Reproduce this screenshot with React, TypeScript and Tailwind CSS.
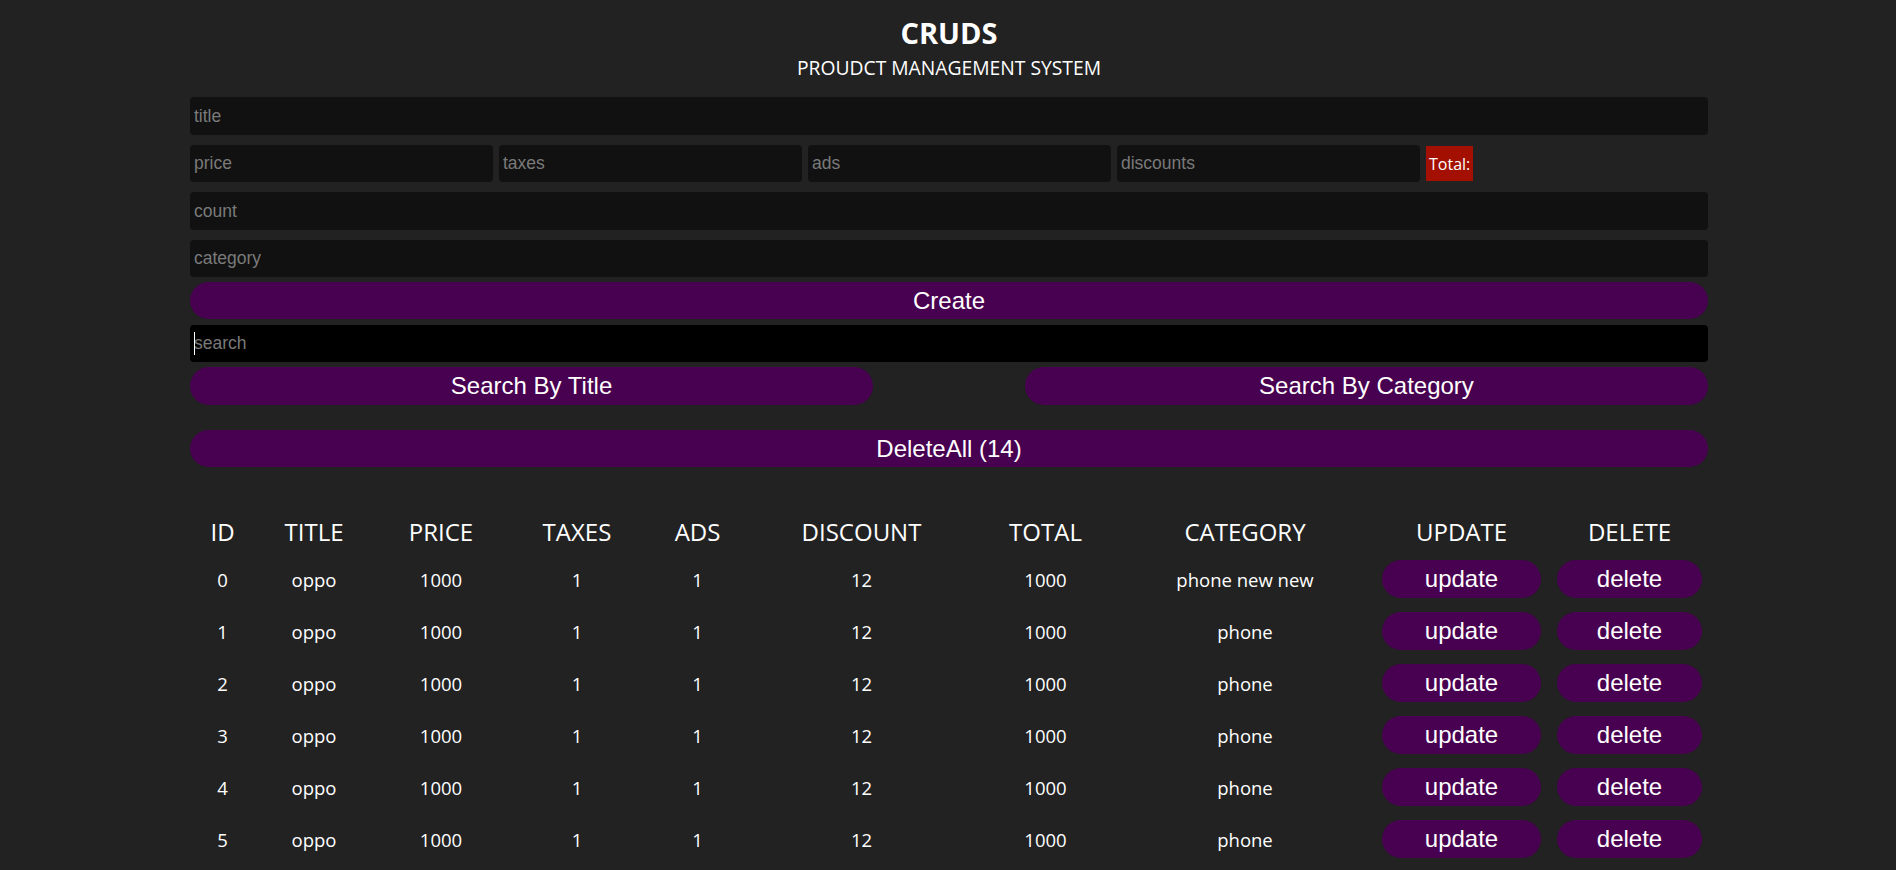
import React from 'react';

// product list shown in the table
const products = Array.from({ length: 14 }, (_, i) => ({
  id: i,
  title: 'oppo',
  price: 1000,
  taxes: 1,
  ads: 1,
  discount: 12,
  total: 1000,
  category: i === 0 ? 'phone new new' : 'phone',
}));

const inputCls =
  "h-[38px] w-full rounded-[4px] bg-[#111] px-[4px] text-[17.5px] text-white outline-none placeholder:text-[#7a7a7a] font-['Liberation_Sans',Arial,sans-serif]";

const btnCls =
  "h-[37px] w-full rounded-[20px] bg-[#480050] text-[24px] text-white font-['Liberation_Sans',Arial,sans-serif]";

export default function App() {
  return (
    <div className="h-screen overflow-hidden bg-[#222] text-white font-['Open_Sans',sans-serif]">
      <div className="ml-[190px] w-[1518px]">
        {/* Head */}
        <div className="pt-[15px] text-center uppercase">
          <h2 className="text-[29px] font-bold leading-[36px]">cruds</h2>
          <p className="mt-[2px] text-[19.3px] leading-[30px]">proudct management system</p>
        </div>

        {/* Inputs */}
        <div className="mt-[14px] flex flex-col">
          <input className={inputCls} placeholder="title" />
          <div className="mt-[10px] flex h-[37px] items-center gap-[6px]">
            <input className={inputCls + ' !w-[303px] !h-[37px]'} placeholder="price" />
            <input className={inputCls + ' !w-[303px] !h-[37px]'} placeholder="taxes" />
            <input className={inputCls + ' !w-[303px] !h-[37px]'} placeholder="ads" />
            <input className={inputCls + ' !w-[303px] !h-[37px]'} placeholder="discounts" />
            <span className="flex h-[35px] items-center bg-[#a30f00] px-[3px] text-[16px]">Total:</span>
          </div>
          <input className={inputCls + ' mt-[10px]'} placeholder="count" />
          <input className={inputCls + ' mt-[10px] !h-[37px]'} placeholder="category" />
          <button className={btnCls + ' mt-[5px]'}>Create</button>
        </div>

        {/* Search */}
        <div className="mt-[6px]">
          <div className="relative">
            <input className={inputCls + ' !h-[37px] !bg-black'} placeholder="search" />
            <span className="pointer-events-none absolute left-[4px] top-[7px] h-[23px] w-px bg-white" />
          </div>
          <div className="mt-[5px] flex justify-between">
            <button className={btnCls + ' !h-[38px] !w-[45%]'}>Search By Title</button>
            <button className={btnCls + ' !h-[38px] !w-[45%]'}>Search By Category</button>
          </div>
        </div>

        <div className="mt-[25px]">
          <button className={btnCls}>DeleteAll (14)</button>
        </div>

        {/* Table */}
        <table className="mt-[43px] w-full table-fixed text-center">
          <colgroup>
            <col className="w-[65px]" />
            <col className="w-[118px]" />
            <col className="w-[136px]" />
            <col className="w-[136px]" />
            <col className="w-[105px]" />
            <col className="w-[223px]" />
            <col className="w-[145px]" />
            <col className="w-[254px]" />
            <col className="w-[179px]" />
            <col />
          </colgroup>
          <thead>
            <tr className="text-[24px] uppercase">
              <th className="py-[5px] font-normal leading-[33px]">id</th>
              <th className="py-[5px] font-normal leading-[33px]">title</th>
              <th className="py-[5px] font-normal leading-[33px]">price</th>
              <th className="py-[5px] font-normal leading-[33px]">taxes</th>
              <th className="py-[5px] font-normal leading-[33px]">ads</th>
              <th className="py-[5px] font-normal leading-[33px]">discount</th>
              <th className="py-[5px] font-normal leading-[33px]">total</th>
              <th className="py-[5px] font-normal leading-[33px]">category</th>
              <th className="py-[5px] font-normal leading-[33px]">update</th>
              <th className="py-[5px] font-normal leading-[33px]">delete</th>
            </tr>
          </thead>
          <tbody className="text-[18.5px]">
            {products.map((p) => (
              <tr key={p.id}>
                <td className="pt-[8px] pb-[6px]">{p.id}</td>
                <td className="pt-[8px] pb-[6px]">{p.title}</td>
                <td className="pt-[8px] pb-[6px]">{p.price}</td>
                <td className="pt-[8px] pb-[6px]">{p.taxes}</td>
                <td className="pt-[8px] pb-[6px]">{p.ads}</td>
                <td className="pt-[8px] pb-[6px]">{p.discount}</td>
                <td className="pt-[8px] pb-[6px]">{p.total}</td>
                <td className="pt-[8px] pb-[6px]">{p.category}</td>
                <td className="py-[7px]">
                  <button className="h-[38px] w-[159px] rounded-[20px] bg-[#480050] text-[24px] text-white font-['Liberation_Sans',Arial,sans-serif]">
                    update
                  </button>
                </td>
                <td className="py-[7px]">
                  <button className="h-[38px] w-[145px] rounded-[20px] bg-[#480050] text-[24px] text-white font-['Liberation_Sans',Arial,sans-serif]">
                    delete
                  </button>
                </td>
              </tr>
            ))}
          </tbody>
        </table>
      </div>
    </div>
  );
}
